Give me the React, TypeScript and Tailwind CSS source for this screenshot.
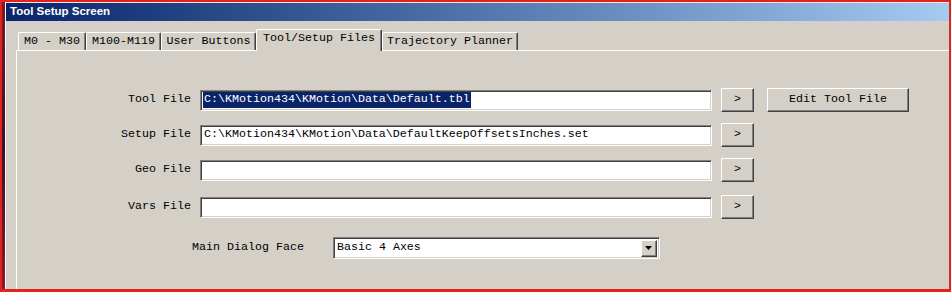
const mono = "font-['Liberation_Mono','Courier_New',monospace] text-[11.67px] leading-none text-black";
const sunken =
  "border border-[#808080] border-r-white border-b-white shadow-[inset_1px_1px_0_#404040,inset_-1px_-1px_0_#d4d0c8] bg-white";
const raised =
  "border border-white border-r-[#404040] border-b-[#404040] shadow-[inset_-1px_-1px_0_#808080,inset_1px_1px_0_#d4d0c8] bg-[#d4d0c8]";

type Tab = { label: string; w: string; active?: boolean };

const tabs: Tab[] = [
  { label: "M0 - M30", w: "w-[68px]" },
  { label: "M100-M119", w: "w-[75px]" },
  { label: "User Buttons", w: "w-[95px]" },
  { label: "Tool/Setup Files", w: "w-[126px]", active: true },
  { label: "Trajectory Planner", w: "w-[136px]" },
];

function FileRow({
  label,
  value,
  selected,
  extra,
  className,
}: {
  label: string;
  value?: string;
  selected?: boolean;
  extra?: boolean;
  className?: string;
}) {
  return (
    <div className={`flex items-center h-[24px] ${className ?? ""}`}>
      <div className={`w-[174px] text-right ${mono}`}>{label}</div>
      <div className={`ml-[9px] w-[512px] h-[21px] flex items-center pl-[2px] ${sunken} ${mono}`}>
        {value && (
          <span className={selected ? "bg-[#0a246a] text-white py-[2px] px-px" : "px-px"}>{value}</span>
        )}
      </div>
      <button className={`ml-[9px] w-[33px] h-[24px] flex items-center justify-center ${raised} ${mono}`}>
        &gt;
      </button>
      {extra && (
        <button className={`ml-[13px] w-[142px] h-[24px] flex items-center justify-center ${raised} ${mono}`}>
          Edit Tool File
        </button>
      )}
    </div>
  );
}

export default function App() {
  return (
    <div className="w-[951px] h-[292px] bg-[#d4d0c8] border-t-2 border-r-2 border-b-[3px] border-[#e2231a] flex overflow-hidden">
      <div className="w-[2px] bg-[#e2231a]" />
      <div className="w-[3px] bg-gradient-to-b from-[#7a1a2a] via-[#3a1030] to-[#8a1a28]" />
      <div className="flex-1 flex flex-col border-l border-white">
        <div className="h-px bg-[#ece9e4]" />
        <div className="h-[18px] flex items-center pl-[4px] bg-gradient-to-r from-[#0a246a] to-[#a6caf0]">
          <span className="font-['Liberation_Sans',Arial,sans-serif] font-bold text-[11.5px] text-white">
            Tool Setup Screen
          </span>
        </div>
        <div className="flex-1 flex flex-col pl-[10px] pt-[9px]">
          <div className="flex items-end h-[20px] pl-[2px]">
            {tabs.map((t) => (
              <div
                key={t.label}
                className={`${t.w} flex items-center justify-center border-t border-l border-white border-r border-r-[#404040] shadow-[inset_-1px_0_0_#808080] rounded-t-[2px] ${mono} ${
                  t.active ? "h-[22px] -mb-px relative z-10 bg-[#d4d0c8] pb-[3px]" : "h-[18px]"
                }`}
              >
                {t.label}
              </div>
            ))}
          </div>
          <div className="flex-1 border-t border-l border-white flex flex-col pt-[37px]">
            <FileRow label="Tool File" value="C:\KMotion434\KMotion\Data\Default.tbl" selected extra />
            <FileRow
              label="Setup File"
              value="C:\KMotion434\KMotion\Data\DefaultKeepOffsetsInches.set"
              className="mt-[11px]"
            />
            <FileRow label="Geo File" className="mt-[11px]" />
            <FileRow label="Vars File" className="mt-[13px]" />
            <div className="flex items-center mt-[18px] pl-[175px] h-[22px]">
              <span className={mono}>Main Dialog Face</span>
              <div className={`ml-[29px] w-[327px] h-[22px] flex items-center justify-between pl-[3px] pr-[2px] ${sunken}`}>
                <span className={mono}>Basic 4 Axes</span>
                <div className={`w-[16px] h-[17px] flex items-center justify-center ${raised}`}>
                  <svg width="7" height="4" viewBox="0 0 7 4">
                    <path d="M0 0h7L3.5 4z" fill="#000" />
                  </svg>
                </div>
              </div>
            </div>
          </div>
        </div>
      </div>
    </div>
  );
}
